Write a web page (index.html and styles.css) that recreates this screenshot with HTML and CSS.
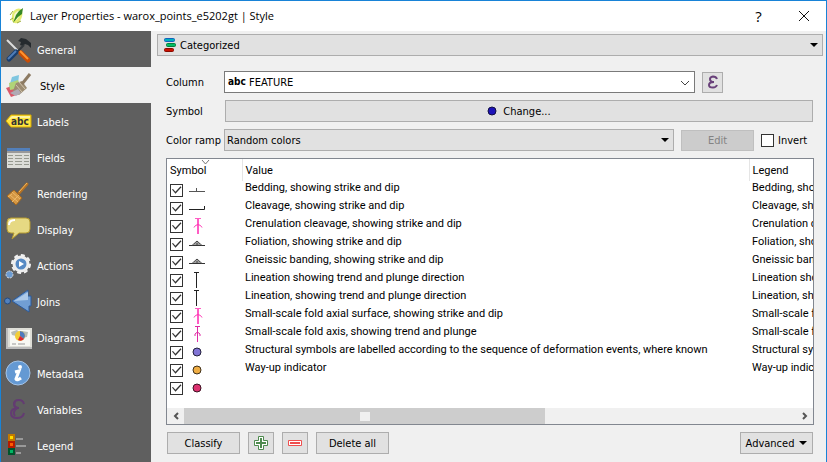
FILE: index.html
```html
<!DOCTYPE html>
<html lang="en">
<head>
<meta charset="utf-8">
<title>Layer Properties</title>
<link rel="stylesheet" href="styles.css">
</head>
<body>
<svg class="defs" aria-hidden="true">
  <symbol id="bedding" viewBox="0 0 16 16"><path d="M0 9.5H16M7.500 9V6" stroke="#555" fill="none"/></symbol>
  <symbol id="cleavage" viewBox="0 0 16 16"><path d="M0 9.500H15.500V6" stroke="#222" fill="none"/></symbol>
  <symbol id="crenulation" viewBox="0 0 16 16"><path d="M6 .5h6M9.500 1v15M8.500 1v15" stroke="#ff5cc4" fill="none"/><path d="M5 9.500Q6 7 9 6.500Q12 7 13 9.500" stroke="#ff35b5" fill="none"/></symbol>
  <symbol id="foliation" viewBox="0 0 16 16"><path d="M0 9.500H16" stroke="#333"/><path d="M3 9.500 8 5l5 4.500M8 5v4M5 8h6" stroke="#444" fill="none"/></symbol>
  <symbol id="lineation" viewBox="0 0 16 16"><path d="M5 .5h5M7.500 1v15" stroke="#222" fill="none"/></symbol>
  <symbol id="foldaxis" viewBox="0 0 16 16"><path d="M6 .5h5M8.500 1v15" stroke="#df2ba4" fill="none"/><path d="M6 10V8L8.500 6 11 8v2" stroke="#df2ba4" fill="none"/></symbol>
</svg>
<div class="window">
  <header class="titlebar">
    <svg class="app" width="16" height="18" viewBox="0 0 16 18"><path d="M3 9C3 3 9 0 12 2c3 4 1 12-4 14-4 1-6-2-5-7z" fill="#e4ec72"/><path d="M5 9c0-3 3-5 5-5 1 3 0 8-3 9-2 0-2-2-2-4z" fill="#f6f7cf"/><path d="M4 16 7 8l3-4 4-3-1 6-4 3z" fill="#368724"/><path d="m1 8 3-4M1 13l3-2m4 5 4-2" stroke="#9dae38"/></svg>
    <h1>Layer Properties - warox_points_e5202gt | Style</h1>
    <button class="plain help" aria-label="Help">?</button>
    <button class="plain" aria-label="Close"><svg width="12" height="12" viewBox="0 0 12 12"><path d="m1 1 10 10M11 1 1 11" stroke="#111" fill="none"/></svg></button>
  </header>
  <div class="content">
    <nav class="sidebar">
      <a href="#"><svg viewBox="0 0 28 28"><path d="m3 4 11 11" stroke="#ddd" stroke-width="2"/><path d="m14 5 3-3 5 1 5 4v5l-3-3-3-1-2 2-3-1 1-3z" fill="#252a2e"/><path d="M20 9 13 16" stroke="#33383c" stroke-width="2"/><path d="M12 16 5 23" stroke="#183e70" stroke-width="5" stroke-linecap="round"/><path d="M12 15 4 23" stroke="#517eb8" stroke-width="2"/><path d="m17 17 7 7" stroke="#c94d05" stroke-width="5" stroke-linecap="round"/><path d="m16 15 8 8" stroke="#ff942e" stroke-width="2"/></svg>General</a>
      <a href="#" class="active" aria-current="page"><svg viewBox="0 0 28 28"><path d="m8 5 7-2-1 9-9 3z" fill="#7fc6e0"/><path d="m2 16 9-3 4 9-8 3z" fill="#d8596a"/><path d="m5 11 9-3 3 8-11 2z" fill="#b0d478"/><path d="m12 11 6-2 5 7-8 7-6-4z" fill="#9c8c72"/><path d="m18 12 8-10" stroke="#8c7a62" stroke-width="3"/><path d="m12 13 6 7m-3-10 6 7" stroke="#d0c4ad"/><path d="m6 21 6 3 5-3-3-4z" fill="#b0aab5"/></svg>Style</a>
      <a href="#"><svg viewBox="0 0 28 28"><path d="m2 13 5-6h20v12H7z" fill="#ffe43f" stroke="#d7aa00"/><path d="m4 12 4-4h18v2H9z" fill="#fff4a0"/><text x="7" y="17" class="tag">abc</text></svg>Labels</a>
      <a href="#"><svg viewBox="0 0 28 28"><path d="M3 4h23v20H3z" fill="#dcddd8"/><path d="M3 4h23v3H3z" fill="#527fba"/><path d="M3 7h23v2H3z" fill="#999"/><path d="M4 11.500h5m2 0h7m2 0h5M4 14.500h5m2 0h7m2 0h5M4 17.500h5m2 0h7m2 0h5M4 20.500h5m2 0h7m2 0h5" stroke="#96998f"/></svg>Fields</a>
      <a href="#"><svg viewBox="0 0 28 28"><path d="m15 13 8-9" stroke="#b57224" stroke-width="3" stroke-linecap="round"/><path d="m15 12 8-9" stroke="#f0b85e"/><path d="m10 10 8 8-6 7-9-9z" fill="#d39643" stroke="#a4671e"/><path d="m6 15 8 7M8 12l8 7M4 17l4-3M8 22l7-7" stroke="#edb868"/></svg>Rendering</a>
      <a href="#"><svg viewBox="0 0 28 28"><path d="M7 2h15q4 0 4 4v7q0 4-4 4h-7l-7 6 2-6H7q-4 0-4-4V6q0-4 4-4z" fill="#e6d983" stroke="#b59a30"/><path d="M5 9q0-5 6-5" stroke="#fff" stroke-width="2" fill="none"/></svg>Display</a>
      <a href="#"><svg viewBox="0 0 28 28"><circle cx="17" cy="12" r="9" fill="none" stroke="#f1f1f1" stroke-width="2" stroke-dasharray="4 3"/><circle cx="17" cy="12" r="7" fill="#578ac4" stroke="#eee" stroke-width="3"/><path d="m15 9 5 3-5 3z" fill="#fff"/><circle cx="5.500" cy="22.500" r="3.500" fill="#6b9bd1" stroke="#ddd" stroke-dasharray="2 1"/></svg>Actions</a>
      <a href="#"><svg viewBox="0 0 28 28"><path d="m8 13 16-11v6h3v10h-2v6z" fill="#719ed3" stroke="#2b5a9c"/><path d="m10 13 14-9v8z" fill="#acc9e9"/><circle cx="3.500" cy="13" r="3" fill="#5281bd" stroke="#244a7e"/></svg>Joins</a>
      <a href="#"><svg viewBox="0 0 28 28"><path d="M3 4h25v21H3z" fill="#deded7"/><path d="M6 6h20v16H6z" fill="#f8f8f3"/><path d="m7 8 6-2 3 3-4 3-4-1zm11-1 6 1-1 5-5 1z" fill="#b9bdb5"/><path d="M3 4v20h25" stroke="#bbb" stroke-width="2" fill="none"/><circle cx="16" cy="12" r="5" fill="#f2cd38"/><path d="M16 12V7a5 5 0 0 1 4 8z" fill="#517abd"/><path d="m16 12 4 3a5 5 0 0 1-6 1z" fill="#dc2533"/><path d="M8 20h4m2 0h7" stroke="#999"/></svg>Diagrams</a>
      <a href="#"><svg viewBox="0 0 28 28"><circle cx="14" cy="13" r="12" fill="#6499d3" stroke="#a6c4e6"/><circle cx="16" cy="7" r="2" fill="#fff"/><path d="m11 12 4-1-3 8q1 2 5-1" fill="none" stroke="#fff" stroke-width="3"/></svg>Metadata</a>
      <a href="#"><svg viewBox="0 0 28 28"><path d="M20 8Q19 4 15 4q-5 0-5 4 0 4 5 4M15 12q-8 0-8 5 0 5 6 5 6 0 7-5" fill="none" stroke="#633b72" stroke-width="2"/><path d="M11 6q-2 4 2 6-5 4-2 8" fill="none" stroke="#633b72" stroke-width="2"/></svg>Variables</a>
      <a href="#"><svg viewBox="0 0 28 28"><path d="M5 3h5v5H5z" fill="#ffdc00" stroke="#c27900" stroke-width="2"/><path d="M5 10h5v5H5z" fill="#ff5b00" stroke="#b51b00" stroke-width="2"/><path d="M5 17h5v5H5z" fill="#00b764" stroke="#00542d" stroke-width="2"/><path d="M12 7h7M12 14h10M12 21h5" stroke="#999" stroke-width="2"/></svg>Legend</a>
    </nav>
    <main>
      <div class="combo renderer">
        <svg class="lead" width="14" height="14" viewBox="0 0 14 14"><rect x="1.500" y=".5" width="10" height="3" rx="1" fill="#00aebd" stroke="#1261bc"/><rect x="3.500" y="5.500" width="9" height="3" rx="1" fill="#00bd64" stroke="#067b3d"/><rect x="1.500" y="10.500" width="9" height="3" rx="1" fill="#ca1000" stroke="#870b00"/></svg>
        <select aria-label="Renderer"><option>Categorized</option></select>
        <svg class="arrow" width="8" height="4" viewBox="0 0 8 4"><path d="M0 0h8L4 4z"/></svg>
      </div>
      <div class="panel">
        <div class="row">
          <label for="column">Column</label>
          <div class="combo column">
            <span class="lead type">abc</span>
            <select id="column"><option>FEATURE</option></select>
            <svg class="arrow" width="10" height="6" viewBox="0 0 10 6"><path d="m1 1 4 4 4-4" stroke="#444" fill="none"/></svg>
          </div>
          <button class="expr" aria-label="Expression"><svg width="12" height="14" viewBox="0 0 12 14"><path d="M10 4Q9 1.500 6 1.500 3 2 3 4q0 3 4 3-5 0-5 3 0 2.500 4 2.500Q9 12.500 10 10" fill="none" stroke="#69417a" stroke-width="2"/></svg></button>
        </div>
        <div class="row">
          <label for="symbol">Symbol</label>
          <button id="symbol" class="wide"><svg width="10" height="10" viewBox="0 0 10 10"><circle cx="5" cy="5" r="4" fill="#1d13b9" stroke="#121043"/></svg>Change...</button>
        </div>
        <div class="row">
          <label for="ramp">Color ramp</label>
          <div class="combo">
            <select id="ramp"><option>Random colors</option></select>
            <svg class="arrow" width="8" height="4" viewBox="0 0 8 4"><path d="M0 0h8L4 4z"/></svg>
          </div>
          <button class="edit" disabled>Edit</button>
          <label class="invert"><input type="checkbox">Invert</label>
        </div>
        <div class="list">
          <div class="view">
            <table>
              <thead><tr><th class="sym">Symbol<svg class="sort" width="9" height="5" viewBox="0 0 9 5"><path d="m1 0 3.500 4L8 0" stroke="#777" fill="none"/></svg></th><th class="val">Value</th><th>Legend</th></tr></thead>
              <tbody>
                <tr><td><input type="checkbox" checked aria-label="Show 1"><svg class="mark"><use href="#bedding"/></svg></td><td>Bedding, showing strike and dip</td><td>Bedding, showing strike and dip</td></tr>
                <tr><td><input type="checkbox" checked aria-label="Show 2"><svg class="mark"><use href="#cleavage"/></svg></td><td>Cleavage, showing strike and dip</td><td>Cleavage, showing strike and dip</td></tr>
                <tr><td><input type="checkbox" checked aria-label="Show 3"><svg class="mark"><use href="#crenulation"/></svg></td><td>Crenulation cleavage, showing strike and dip</td><td>Crenulation cleavage, showing strike and dip</td></tr>
                <tr><td><input type="checkbox" checked aria-label="Show 4"><svg class="mark"><use href="#foliation"/></svg></td><td>Foliation, showing strike and dip</td><td>Foliation, showing strike and dip</td></tr>
                <tr><td><input type="checkbox" checked aria-label="Show 5"><svg class="mark"><use href="#foliation"/></svg></td><td>Gneissic banding, showing strike and dip</td><td>Gneissic banding, showing strike and dip</td></tr>
                <tr><td><input type="checkbox" checked aria-label="Show 6"><svg class="mark"><use href="#lineation"/></svg></td><td>Lineation showing trend and plunge direction</td><td>Lineation showing trend and plunge direction</td></tr>
                <tr><td><input type="checkbox" checked aria-label="Show 7"><svg class="mark"><use href="#lineation"/></svg></td><td>Lineation, showing trend and plunge direction</td><td>Lineation, showing trend and plunge direction</td></tr>
                <tr><td><input type="checkbox" checked aria-label="Show 8"><svg class="mark"><use href="#crenulation"/></svg></td><td>Small-scale fold axial surface, showing strike and dip</td><td>Small-scale fold axial surface, showing strike and dip</td></tr>
                <tr><td><input type="checkbox" checked aria-label="Show 9"><svg class="mark"><use href="#foldaxis"/></svg></td><td>Small-scale fold axis, showing trend and plunge</td><td>Small-scale fold axis, showing trend and plunge</td></tr>
                <tr><td><input type="checkbox" checked aria-label="Show 10"><svg class="mark" viewBox="0 0 16 16"><circle cx="8" cy="8" r="4" fill="#8174d5" stroke="#25223d"/></svg></td><td>Structural symbols are labelled according to the sequence of deformation events, where known</td><td>Structural symbols are labelled according to the sequence</td></tr>
                <tr><td><input type="checkbox" checked aria-label="Show 11"><svg class="mark" viewBox="0 0 16 16"><circle cx="8" cy="8" r="4" fill="#efad43" stroke="#3f311c"/></svg></td><td>Way-up indicator</td><td>Way-up indicator</td></tr>
                <tr><td><input type="checkbox" checked aria-label="Show 12"><svg class="mark" viewBox="0 0 16 16"><circle cx="8" cy="8" r="4" fill="#dc3270" stroke="#3b1322"/></svg></td><td></td><td></td></tr>
              </tbody>
            </table>
          </div>
          <div class="scrollbar">
            <button class="plain" aria-label="Scroll left"><svg width="6" height="8" viewBox="0 0 6 8"><path d="M5 1 2 4l3 3" stroke="#555" stroke-width="2" fill="none"/></svg></button>
            <div class="track"><div class="thumb"><span></span></div></div>
            <button class="plain" aria-label="Scroll right"><svg width="6" height="8" viewBox="0 0 6 8"><path d="m1 1 3 3-3 3" stroke="#555" stroke-width="2" fill="none"/></svg></button>
          </div>
        </div>
        <div class="actions">
          <button>Classify</button>
          <button class="icon" aria-label="Add"><svg width="14" height="14" viewBox="0 0 14 14"><path d="M4.500.5h5v4h4v5h-4v4h-5v-4h-4v-5h4z" fill="#fff" stroke="#4f8b4f"/><path d="M7 2v10M2 7h10" stroke="#4f8b4f" stroke-width="2"/></svg></button>
          <button class="icon" aria-label="Remove"><svg width="14" height="6" viewBox="0 0 14 6"><path d="M.5.5h13v5H.5z" fill="#fff" stroke="#ef4e4e"/><path d="M2 3h10" stroke="#ef4e4e" stroke-width="2"/></svg></button>
          <button>Delete all</button>
          <button class="advanced">Advanced<svg width="8" height="4" viewBox="0 0 8 4"><path d="M0 0h8L4 4z"/></svg></button>
        </div>
      </div>
    </main>
  </div>
</div>
</body>
</html>
```
FILE: styles.css
```css
* { box-sizing: border-box; }
body { margin: 0; overflow: hidden; background: #f0f0f0; }
body, button, select { font: 11px/13px "DejaVu Sans Condensed", "Noto Sans", sans-serif; color: #000; }
svg { flex: none; }
.defs { display: none; }
.window { height: 100vh; overflow: hidden; display: flex; flex-direction: column; border: 1px solid #1883d7; border-bottom: 0; }
.titlebar { flex: none; height: 30px; display: flex; align-items: center; background: #fff; padding-left: 8px; }
.titlebar h1 { flex: 1; margin: 0 0 0 5px; font: 11px/16px "Open Sans", "Noto Sans", sans-serif; }
button { display: flex; align-items: center; justify-content: center; padding: 0; height: 22px; border: 1px solid #adadad; background: #e1e1e1; }
button.plain { border: 0; background: none; width: 45px; }
.help { font: 15px/18px "Open Sans", sans-serif; }
.content { flex: 1; min-height: 0; display: flex; }
.sidebar { flex: none; width: 150px; background: #5f5f5f; overflow: hidden; }
.sidebar a { display: flex; align-items: center; gap: 5px; height: 36px; padding: 2px 0 0 3px; color: #fff; text-decoration: none; }
.sidebar svg { width: 28px; height: 28px; }
.sidebar a.active { background: #f0f0f0; color: #000; gap: 8px; }
.tag { font: bold 10px "DejaVu Sans Condensed", sans-serif; fill: #333; }
main { flex: 1; min-width: 0; padding: 3px 3px 0 6px; }
.combo { position: relative; flex: 1; min-width: 0; height: 22px; }
.combo select { appearance: none; display: block; width: 100%; height: 100%; border: 1px solid #adadad; border-radius: 0; background: #e1e1e1; padding: 0 20px 0 2px; }
.combo .lead { position: absolute; left: 6px; top: 4px; }
.combo .arrow { position: absolute; right: 5px; top: 9px; pointer-events: none; }
.renderer select { padding-left: 22px; }
.combo.column select { background: #fff; border-color: #7a7a7a; padding-left: 24px; }
.combo .type { left: 4px; font-weight: bold; font-size: 10px; }
.panel { padding: 15px 9px 0; display: flex; flex-direction: column; gap: 7px; }
.row { display: flex; align-items: center; gap: 7px; height: 22px; }
.row > label:first-child { width: 51px; white-space: nowrap; }
.expr { width: 21px; height: 21px; margin-right: 91px; }
.wide { flex: 1; gap: 6px; margin-left: 1px; margin-right: 1px; }
.edit { width: 73px; height: 21px; }
.edit:disabled { background: #ccc; border-color: #bfbfbf; color: #838383; }
.invert { display: flex; align-items: center; gap: 4px; width: 53px; }
input[type="checkbox"] { appearance: none; flex: none; width: 13px; height: 13px; margin: 0; border: 1px solid #333; background: #fff; }
input[type="checkbox"]:checked::before { content: ""; display: block; width: 11px; height: 11px; background: #333; clip-path: polygon(9% 45%, 18% 40%, 40% 66%, 87% 16%, 95% 25%, 41% 83%); }
.list { border: 1px solid #828790; background: #fff; }
.view { height: 249px; overflow: hidden; }
table { table-layout: fixed; width: 1200px; border-collapse: collapse; font-family: Roboto, "DejaVu Sans Condensed", sans-serif; }
th { position: relative; height: 22px; padding: 0 3px; text-align: left; font-weight: normal; }
th + th { border-left: 1px solid #e5e5e5; }
.sym { width: 75px; }
.val { width: 507px; }
.sort { position: absolute; left: 34px; top: 1px; }
td { height: 18px; padding: 0 3px; vertical-align: top; white-space: nowrap; }
td:first-child { display: flex; align-items: center; gap: 6px; }
.mark { width: 16px; height: 16px; }
.scrollbar { display: flex; height: 16px; background: #f0f0f0; }
.scrollbar button.plain { width: 17px; height: 16px; }
.track { flex: 1; }
.thumb { display: flex; align-items: center; justify-content: center; width: 59%; height: 16px; background: #cdcdcd; }
.thumb span { width: 10px; height: 9px; background: #f0f0f0; }
.actions { display: flex; gap: 8px; padding: 0 1px; }
.actions button { width: 73px; }
.actions button.icon { width: 26px; }
.actions .advanced { margin-left: auto; gap: 5px; }
```
